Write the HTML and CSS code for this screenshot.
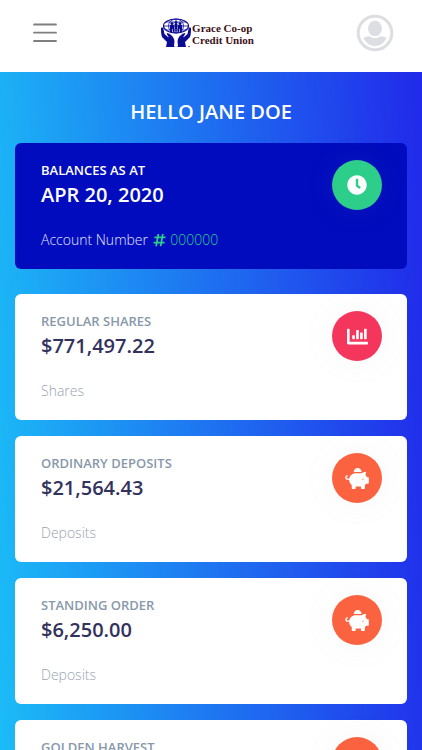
FILE: index.html
```html
<!DOCTYPE html>
<html lang="en">
<head>
  <meta charset="UTF-8">
  <meta name="viewport" content="width=device-width, initial-scale=1.0">
  <title>Grace Co-op Credit Union</title>
  <link rel="stylesheet" href="styles.css">
</head>
<body>
  <!-- Icon shapes -->
  <svg class="sprite" aria-hidden="true">
    <symbol id="icon-clock" viewBox="0 0 512 512">
      <path d="M256,8C119,8,8,119,8,256S119,504,256,504,504,393,504,256,393,8,256,8Zm92.49,313h0l-20,25a16,16,0,0,1-22.49,2.5h0l-67-49.72a40,40,0,0,1-15-31.23V112a16,16,0,0,1,16-16h32a16,16,0,0,1,16,16V256l58,42.5A16,16,0,0,1,348.49,321Z"/>
    </symbol>
    <symbol id="icon-chart" viewBox="0 0 512 512">
      <path d="M332.8 320h38.4c6.4 0 12.8-6.4 12.8-12.8V172.8c0-6.4-6.4-12.8-12.8-12.8h-38.4c-6.4 0-12.8 6.4-12.8 12.8v134.4c0 6.4 6.4 12.8 12.8 12.8zm96 0h38.4c6.4 0 12.8-6.4 12.8-12.8V76.8c0-6.4-6.4-12.8-12.8-12.8h-38.4c-6.4 0-12.8 6.4-12.8 12.8v230.4c0 6.4 6.4 12.8 12.8 12.8zm-288 0h38.4c6.4 0 12.8-6.4 12.8-12.8v-70.4c0-6.4-6.4-12.8-12.8-12.8h-38.4c-6.4 0-12.8 6.4-12.8 12.8v70.4c0 6.4 6.4 12.8 12.8 12.8zm96 0h38.4c6.4 0 12.8-6.4 12.8-12.8V108.8c0-6.4-6.4-12.8-12.8-12.8h-38.4c-6.4 0-12.8 6.4-12.8 12.8v198.4c0 6.4 6.4 12.8 12.8 12.8zM496 384H64V80c0-8.84-7.16-16-16-16H16C7.16 64 0 71.16 0 80v336c0 17.67 14.33 32 32 32h464c8.84 0 16-7.16 16-16v-32c0-8.84-7.16-16-16-16z"/>
    </symbol>
    <symbol id="icon-piggy" viewBox="0 0 576 512">
      <path d="M560 224h-29.5c-8.8-20-21.6-37.7-37.4-52.5L512 96h-32c-29.4 0-55.4 13.5-73 34.3-7.6-1.1-15.1-2.3-23-2.3H256c-77.4 0-141.9 55-156.8 128H56c-14.8 0-26.5-13.5-23.5-28.8C34.7 215.8 45.4 208 57 208h1c3.3 0 6-2.7 6-6v-20c0-3.3-2.7-6-6-6-28.5 0-53.9 20.4-57.5 48.6C-3.9 258.8 22.7 288 56 288h40c0 52.2 25.4 98.1 64 127.3V496c0 8.8 7.2 16 16 16h64c8.8 0 16-7.2 16-16v-48h128v48c0 8.8 7.2 16 16 16h64c8.8 0 16-7.2 16-16v-80.7c11.8-8.9 22.3-19.4 31.3-31.3H560c8.8 0 16-7.2 16-16V240c0-8.8-7.2-16-16-16zm-128 64c-8.8 0-16-7.2-16-16s7.2-16 16-16 16 7.2 16 16-7.2 16-16 16zM256 96h128c5.4 0 10.7.4 15.9.8 0-.3.1-.5.1-.8 0-53-43-96-96-96s-96 43-96 96c0 2.1.5 4.1.6 6.2 15.2-3.9 31-6.2 47.4-6.2z"/>
    </symbol>
    <symbol id="icon-hashtag" viewBox="0 0 448 512">
      <path d="M440.667 182.109l7.143-40c1.313-7.355-4.342-14.109-11.813-14.109h-74.81l14.623-81.891C377.123 38.754 371.468 32 363.997 32h-40.632a12 12 0 0 0-11.813 9.891L296.175 128H197.54l14.623-81.891C213.477 38.754 207.822 32 200.35 32h-40.632a12 12 0 0 0-11.813 9.891L132.528 128H53.432a12 12 0 0 0-11.813 9.891l-7.143 40C33.163 185.246 38.818 192 46.289 192h74.81L98.242 320H19.146a12 12 0 0 0-11.813 9.891l-7.143 40C-1.123 377.246 4.532 384 12.003 384h74.81L72.19 465.891C70.877 473.246 76.532 480 84.003 480h40.632a12 12 0 0 0 11.813-9.891L151.826 384h98.634l-14.623 81.891C234.523 473.246 240.178 480 247.65 480h40.632a12 12 0 0 0 11.813-9.891L315.472 384h79.096a12 12 0 0 0 11.813-9.891l7.143-40c1.313-7.355-4.342-14.109-11.813-14.109h-74.81l22.857-128h79.096a12 12 0 0 0 11.813-9.891zM261.889 320h-98.634l22.857-128h98.634l-22.857 128z"/>
    </symbol>
  </svg>

  <!-- Navbar -->
  <header class="navbar">
    <button class="menu-btn" type="button" aria-label="Menu">
      <svg width="26" height="20" viewBox="0 0 26 20">
        <path d="M2 1.500h22M2 9.700h22M2 18h22" stroke="#7f7f7f" stroke-width="1.800" stroke-linecap="round"/>
      </svg>
    </button>
    <a class="brand" href="#">
      <svg width="32" height="30" viewBox="0 0 32 30">
        <g fill="none" stroke="#0c0c92">
          <ellipse cx="16" cy="8" rx="12.500" ry="7" stroke-width="1.200"/>
          <ellipse cx="16" cy="8" rx="7.500" ry="7" stroke-width="0.800"/>
          <path d="M4 8h24M6 4h20M6 12h20M16 1v14" stroke-width="0.800"/>
        </g>
        <g fill="#0c0c92">
          <circle cx="12" cy="5.500" r="1.500"/>
          <circle cx="16" cy="4.500" r="1.500"/>
          <circle cx="20" cy="5.500" r="1.500"/>
          <path d="M10 7h4v7h-1v-3h-1v3h-2zM14.500 6h3v9h-1v-4h-1v4h-1zM18 7h4v7h-2v-3h-1v3h-1z"/>
          <path d="M1 10c1-1 2.500 0 2.500 1l1 5 4 3.500c0-2-2.500-3.500-1.500-4.500 2 0 6 3 7 6s0 4 0 7l1 1H6l1-5-5-5c-1-3-1-6-1-9z"/>
          <path d="M31 10c-1-1-2.500 0-2.500 1l-1 5-4 3.500c0-2 2.500-3.500 1.500-4.500-2 0-6 3-7 6s0 4 0 7l-1 1h9l-1-5 5-5c1-3 1-6 1-9z"/>
          <circle cx="29" cy="28.500" r="0.700"/>
        </g>
      </svg>
      <span class="brand-name">Grace Co-op<br>Credit Union</span>
    </a>
    <button class="user-btn" type="button" aria-label="Profile">
      <svg width="38" height="38" viewBox="0 0 38 38">
        <circle cx="19" cy="19" r="16.800" fill="none" stroke="#dcdee2" stroke-width="3"/>
        <ellipse cx="19" cy="14.500" rx="7" ry="7.700" fill="#dcdee2"/>
        <path d="M7.500 24c2-1.500 4.500-1.800 6.700-1.500 3 2.100 6.600 2.100 9.600 0 2.200-.3 4.700 0 6.700 1.500-2.200 5-6.500 8-11.500 8s-9.300-3-11.500-8z" fill="#dcdee2"/>
      </svg>
    </button>
  </header>

  <!-- Balances -->
  <main class="content">
    <h1>HELLO JANE DOE</h1>

    <section class="card card-primary">
      <div class="card-text">
        <h2>BALANCES AS AT</h2>
        <p class="amount">APR 20, 2020</p>
        <p class="note">Account Number <span class="account"><svg class="hash" width="13" height="14" aria-hidden="true"><use href="#icon-hashtag"/></svg> 000000</span></p>
      </div>
      <div class="icon icon-green"><svg width="20" height="20"><use href="#icon-clock"/></svg></div>
    </section>

    <section class="card">
      <div class="card-text">
        <h2>REGULAR SHARES</h2>
        <p class="amount">$771,497.22</p>
        <p class="note">Shares</p>
      </div>
      <div class="icon icon-red"><svg width="21" height="21"><use href="#icon-chart"/></svg></div>
    </section>

    <section class="card">
      <div class="card-text">
        <h2>ORDINARY DEPOSITS</h2>
        <p class="amount">$21,564.43</p>
        <p class="note">Deposits</p>
      </div>
      <div class="icon icon-orange"><svg width="24" height="21"><use href="#icon-piggy"/></svg></div>
    </section>

    <section class="card">
      <div class="card-text">
        <h2>STANDING ORDER</h2>
        <p class="amount">$6,250.00</p>
        <p class="note">Deposits</p>
      </div>
      <div class="icon icon-orange"><svg width="24" height="21"><use href="#icon-piggy"/></svg></div>
    </section>

    <section class="card">
      <div class="card-text">
        <h2>GOLDEN HARVEST</h2>
      </div>
      <div class="icon icon-orange"><svg width="24" height="21"><use href="#icon-piggy"/></svg></div>
    </section>
  </main>
</body>
</html>
```
FILE: styles.css
```css
* {
  box-sizing: border-box;
}
body {
  display: flex;
  flex-direction: column;
  height: 100vh;
  margin: 0;
  font-family: "Open Sans", sans-serif;
  color: #32325d;
}
h1, h2, p {
  margin: 0;
}
.sprite {
  display: none;
}
.navbar {
  flex: none;
  display: flex;
  align-items: center;
  justify-content: space-between;
  padding: 14px 28px 20px 32px;
  background-color: #fff;
}
.navbar svg {
  display: block;
}
.menu-btn, .user-btn {
  padding: 0;
  border: 0;
  background: none;
  cursor: pointer;
}
.brand {
  display: flex;
  align-items: center;
  text-decoration: none;
}
.brand-name {
  padding-top: 2px;
  font-family: "Liberation Serif", serif;
  font-size: 11px;
  font-weight: bold;
  line-height: 12px;
  color: #3c1016;
}
.content {
  flex: 1;
  min-height: 0;
  overflow-y: auto;
  padding: 25px 15px 16px;
  background: linear-gradient(87deg, #1bbcf7, #2129ea);
  scrollbar-width: none;
}
.content h1 {
  margin-bottom: 16px;
  font-size: 20px;
  font-weight: 600;
  line-height: 30px;
  text-align: center;
  color: #fff;
}
.card {
  display: flex;
  align-items: flex-start;
  justify-content: space-between;
  min-height: 126px;
  margin-bottom: 16px;
  padding: 17px 25px 17px 26px;
  border-radius: 6px;
  background-color: #fff;
}
.card h2 {
  font-size: 13px;
  font-weight: 600;
  line-height: 20px;
  color: #8898aa;
}
.amount {
  margin-bottom: 19px;
  font-size: 20px;
  font-weight: 600;
  line-height: 30px;
}
.note {
  font-size: 14px;
  font-weight: 300;
  line-height: 22px;
  color: #9aa3b0;
}
.card-primary {
  margin-bottom: 25px;
  background-color: #000cbe;
}
.card-primary h2, .card-primary .amount {
  color: #fff;
}
.card-primary .note {
  color: #e4e6fa;
}
.card-primary .account {
  color: #2dce89;
}
.hash {
  margin: 0 1px;
  vertical-align: -2px;
  fill: #2dce89;
}
.icon {
  flex: none;
  display: flex;
  align-items: center;
  justify-content: center;
  width: 50px;
  height: 50px;
  border-radius: 50%;
  box-shadow: 0 0 32px rgba(136, 152, 170, 0.08);
}
.icon svg {
  fill: #fff;
}
.icon-green {
  background-color: #2dce89;
}
.icon-red {
  background-color: #f5365c;
}
.icon-orange {
  background-color: #fb6340;
}
```
